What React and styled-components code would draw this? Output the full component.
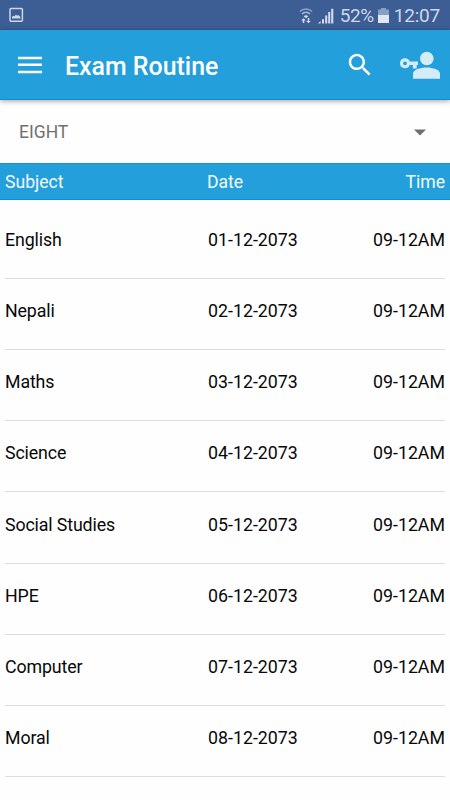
import React, { useState } from "react";
import styled, { createGlobalStyle } from "styled-components";

const GlobalStyle = createGlobalStyle`
  * {
    box-sizing: border-box;
  }

  body {
    margin: 0;
    background: #fefefe;
    font-family: Roboto, "Liberation Sans", sans-serif;
  }

  button {
    border: none;
    background: none;
    padding: 0;
    font: inherit;
    display: flex;
  }
`;

const Screen = styled.div`
  width: 100%;
  height: 800px;
  display: flex;
  flex-direction: column;
  overflow: hidden;
`;

const StatusBar = styled.div`
  height: 30px;
  flex: none;
  padding: 0 10px 0 9px;
  display: flex;
  align-items: center;
  justify-content: space-between;
  background: #3c5e95;
  color: #cdd8e8;
  font-size: 19px;

  svg {
    display: block;
  }
`;

const StatusGroup = styled.div`
  display: flex;
  align-items: center;
  padding-top: 1px;

  .signal {
    margin-left: 5px;
  }

  .battery {
    margin-left: 4px;
  }
`;

const Battery = styled.span`
  margin-left: 6px;
  letter-spacing: -0.45px;
`;

const Clock = styled.span`
  margin-left: 5px;
  letter-spacing: -0.2px;
`;

const Toolbar = styled.header`
  height: 70px;
  flex: none;
  display: flex;
  align-items: center;
  padding: 0 10px 0 18px;
  background: #239fdb;
  border-bottom: 1px solid #108fd0;
  box-shadow: 0 1px 5px rgba(0, 0, 0, 0.38);
  position: relative;
  color: #ffffff;

  h1 {
    flex: 1;
    margin: 4px 0 0 23px;
    font-size: 24.9px;
    font-weight: 500;
    line-height: 30px;
  }
`;

const LoginButton = styled.button`
  margin-left: 25px;
`;

const ClassPicker = styled.button`
  && {
    height: 62.5px;
    flex: none;
    display: flex;
    align-items: center;
    justify-content: space-between;
    padding: 2px 24px 0 19px;
    color: #707070;
    font-size: 17.5px;
  }
`;

const Cells = styled.div`
  display: grid;
  grid-template-columns: 203px 1fr auto;
  align-items: center;
`;

const TableHeader = styled(Cells)`
  height: 37.5px;
  flex: none;
  padding: 1px 5px 0;
  background: #239fdb;
  border-top: 1px solid #1594d4;
  border-bottom: 1px solid #108fd0;
  color: #f3fbff;
  font-size: 17.6px;

  span:nth-child(2) {
    margin-left: -1px;
  }
`;

const List = styled.div`
  padding: 7.3px 5px 0;
`;

const Row = styled(Cells)`
  height: 71.25px;
  padding-bottom: 6.8px;
  border-bottom: 1px solid #dcdcdc;
  color: #080808;
  font-size: 17.8px;

  span:first-child {
    letter-spacing: -0.13px;
  }
`;

const exams = [
  { subject: "English", date: "01-12-2073", time: "09-12AM" },
  { subject: "Nepali", date: "02-12-2073", time: "09-12AM" },
  { subject: "Maths", date: "03-12-2073", time: "09-12AM" },
  { subject: "Science", date: "04-12-2073", time: "09-12AM" },
  { subject: "Social Studies", date: "05-12-2073", time: "09-12AM" },
  { subject: "HPE", date: "06-12-2073", time: "09-12AM" },
  { subject: "Computer", date: "07-12-2073", time: "09-12AM" },
  { subject: "Moral", date: "08-12-2073", time: "09-12AM" },
];

const PictureIcon = () => (
  <svg width="15" height="16" viewBox="0 0 15 16">
    <rect x="1" y="1.5" width="12.4" height="12.8" rx="1" fill="none" stroke="#cdd8e8" strokeWidth="1.5" />
    <path d="M3 11.5V9.8l1.7-1 .8.4L7 7.5l1 1.2 1.2-.8 2.1 1.9v1.7z" fill="#cdd8e8" />
  </svg>
);

const WifiIcon = () => (
  <svg width="14" height="18" viewBox="0 0 14 18" fill="none">
    <path d="M1 4.6C4.2 1.2 9.8 1.2 13 4.6" stroke="#8fa5c6" strokeWidth="1.4" />
    <path d="M3 7c2.3-2.3 5.7-2.3 8 0" stroke="#a7b9d3" strokeWidth="1.4" />
    <path d="M4.7 9.2c1.3-1.3 3.3-1.3 4.6 0L7 11.3z" fill="#d3dded" />
    <path d="M4.5 12v4M9.5 11v4" stroke="#d3dded" strokeWidth="1.5" />
    <path d="M2.2 13.5l2.3-2.3 2.3 2.3zM7.2 14l2.3 2.3 2.3-2.3z" fill="#d3dded" />
  </svg>
);

const SignalIcon = () => (
  <svg className="signal" width="16" height="16" viewBox="0 0 16 16" fill="#d3dded">
    <path d="M0 15.5l2.6-2.6v2.6zM4 11.3h2v4.2H4zM7.2 7.5h2v8h-2zM10.2 4h2v11.5h-2zM13.2.7h2.1v14.8h-2.1z" />
  </svg>
);

const BatteryIcon = () => (
  <svg className="battery" width="11" height="15" viewBox="0 0 11 15">
    <path d="M3 0h5v1.6h3V7H0V1.6h3z" fill="#879fc3" />
    <path d="M0 7h11v8H0z" fill="#dfe6f1" />
  </svg>
);

const MenuIcon = () => (
  <svg width="24" height="18" viewBox="0 0 24 18" fill="#fff">
    <path d="M0 .7h24v2.5H0zM0 7.6h24v2.5H0zM0 14.7h24v2.5H0z" />
  </svg>
);

const SearchIcon = () => (
  <svg width="30" height="30" viewBox="0 0 24 24" fill="#fff">
    <path d="M15.5 14h-.79l-.28-.27C15.41 12.59 16 11.11 16 9.5 16 5.91 13.09 3 9.5 3S3 5.91 3 9.5 5.91 16 9.5 16c1.61 0 3.09-.59 4.23-1.57l.27.28v.79l5 4.99L20.49 19l-4.99-5zm-6 0C7.01 14 5 11.99 5 9.5S7.01 5 9.5 5 14 7.01 14 9.5 11.99 14 9.5 14z" />
  </svg>
);

const LoginIcon = () => (
  <svg width="40" height="28" viewBox="0 0 40 28" fill="#d3ecf8">
    <circle cx="26.8" cy="7.5" r="6.8" />
    <path d="M13 27.7v-5c0-4 7-6.2 13.5-6.2S40 18.7 40 22.7v5z" />
    <path
      fillRule="evenodd"
      d="M5 7.2a5 5 0 1 0 4.7 6.8h3.2v3.5h3.8V14H18v-3.5H9.7A5 5 0 0 0 5 7.2zm0 3.2a1.9 1.9 0 1 1 0 3.8 1.9 1.9 0 0 1 0-3.8z"
    />
  </svg>
);

const CaretIcon = () => (
  <svg width="12" height="7" viewBox="0 0 12 7">
    <path d="M0 .5h12L6 6.5z" fill="#707070" />
  </svg>
);

const App = () => {
  const [selectedClass] = useState("EIGHT");

  return (
    <>
      <GlobalStyle />
      <Screen>
        <StatusBar>
          <PictureIcon />
          <StatusGroup>
            <WifiIcon />
            <SignalIcon />
            <Battery>52%</Battery>
            <BatteryIcon />
            <Clock>12:07</Clock>
          </StatusGroup>
        </StatusBar>
        <Toolbar>
          <button aria-label="Menu">
            <MenuIcon />
          </button>
          <h1>Exam Routine</h1>
          <button aria-label="Search">
            <SearchIcon />
          </button>
          <LoginButton aria-label="Login">
            <LoginIcon />
          </LoginButton>
        </Toolbar>
        <ClassPicker>
          {selectedClass}
          <CaretIcon />
        </ClassPicker>
        <TableHeader>
          <span>Subject</span>
          <span>Date</span>
          <span>Time</span>
        </TableHeader>
        <List>
          {exams.map((exam) => (
            <Row key={exam.subject}>
              <span>{exam.subject}</span>
              <span>{exam.date}</span>
              <span>{exam.time}</span>
            </Row>
          ))}
        </List>
      </Screen>
    </>
  );
};

export default App;
